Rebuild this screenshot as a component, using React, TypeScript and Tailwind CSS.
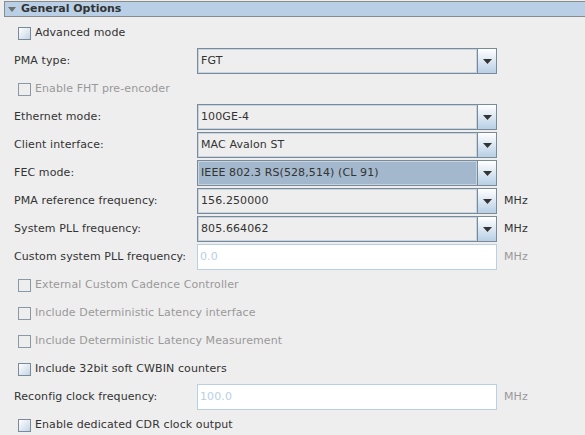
import React from "react";

const font = { fontFamily: '"DejaVu Sans", Verdana, sans-serif' };

function Arrow() {
  return (
    <svg width="9" height="5" viewBox="0 0 9 5" className="block">
      <path d="M0 0H9L4.5 5Z" fill="#333333" />
    </svg>
  );
}

function Combo({ value, selected = false }: { value: string; selected?: boolean }) {
  return (
    <div className="flex h-[26px] w-[300px] border border-[#7a8a99]">
      <div
        className={`flex flex-1 items-center pl-[3px] text-[#333333] shadow-[inset_0_0_0_1px_#c6d4e2] ${
          selected ? "bg-[#a3b8cc]" : "bg-[#eeeeee]"
        }`}
      >
        {value}
      </div>
      <div className="flex w-[19px] items-center justify-center border-l border-[#7a8a99] bg-gradient-to-b from-[#ffffff] to-[#b8cfe5]">
        <Arrow />
      </div>
    </div>
  );
}

function Field({ value }: { value: string }) {
  return (
    <div className="flex h-[26px] w-[300px] items-center border border-[#b8cfe5] bg-white pl-[2px] text-[#b8cfe5]">
      {value}
    </div>
  );
}

function Check({ label, disabled = false }: { label: string; disabled?: boolean }) {
  return (
    <div className="flex h-[28px] items-center pl-[18px]">
      <div
        className={`h-[13px] w-[13px] border ${
          disabled
            ? "border-[#8a99a8] bg-[#eeeeee]"
            : "border-[#7a8a99] bg-gradient-to-br from-[#ffffff] to-[#c4d5e6]"
        }`}
      />
      <span className={`ml-[4px] ${disabled ? "text-[#999999]" : "text-[#333333]"}`}>{label}</span>
    </div>
  );
}

function Row({
  label,
  children,
  unit,
  disabled = false,
}: {
  label: string;
  children: React.ReactNode;
  unit?: string;
  disabled?: boolean;
}) {
  return (
    <div className="flex h-[28px] items-center pl-[14px]">
      <div className="w-[183px] text-[#333333]">{label}</div>
      {children}
      {unit && (
        <span className={`ml-[7px] ${disabled ? "text-[#999999]" : "text-[#333333]"}`}>{unit}</span>
      )}
    </div>
  );
}

export default function App() {
  return (
    <div className="h-[435px] w-[585px] overflow-hidden bg-[#eeeeee] text-[11px] tracking-[0.1px]" style={font}>
      <div className="mb-[2px] pt-[1px] pl-[4px]">
        <div className="flex h-[16px] items-center border-y border-l border-[#8a8a8a] bg-[#b8cfe5] tracking-normal">
          <svg width="8" height="5" viewBox="0 0 8 5" className="ml-[3px] block">
            <path d="M0 0H8L4 5Z" fill="#6f6f6f" />
          </svg>
          <span className="ml-[5px] font-bold text-[#333333]">General Options</span>
        </div>
      </div>
      <Check label="Advanced mode" />
      <Row label="PMA type:">
        <Combo value="FGT" />
      </Row>
      <Check label="Enable FHT pre-encoder" disabled />
      <Row label="Ethernet mode:">
        <Combo value="100GE-4" />
      </Row>
      <Row label="Client interface:">
        <Combo value="MAC Avalon ST" />
      </Row>
      <Row label="FEC mode:">
        <Combo value="IEEE 802.3 RS(528,514) (CL 91)" selected />
      </Row>
      <Row label="PMA reference frequency:" unit="MHz">
        <Combo value="156.250000" />
      </Row>
      <Row label="System PLL frequency:" unit="MHz">
        <Combo value="805.664062" />
      </Row>
      <Row label="Custom system PLL frequency:" unit="MHz" disabled>
        <Field value="0.0" />
      </Row>
      <Check label="External Custom Cadence Controller" disabled />
      <Check label="Include Deterministic Latency interface" disabled />
      <Check label="Include Deterministic Latency Measurement" disabled />
      <Check label="Include 32bit soft CWBIN counters" />
      <Row label="Reconfig clock frequency:" unit="MHz" disabled>
        <Field value="100.0" />
      </Row>
      <Check label="Enable dedicated CDR clock output" />
    </div>
  );
}
